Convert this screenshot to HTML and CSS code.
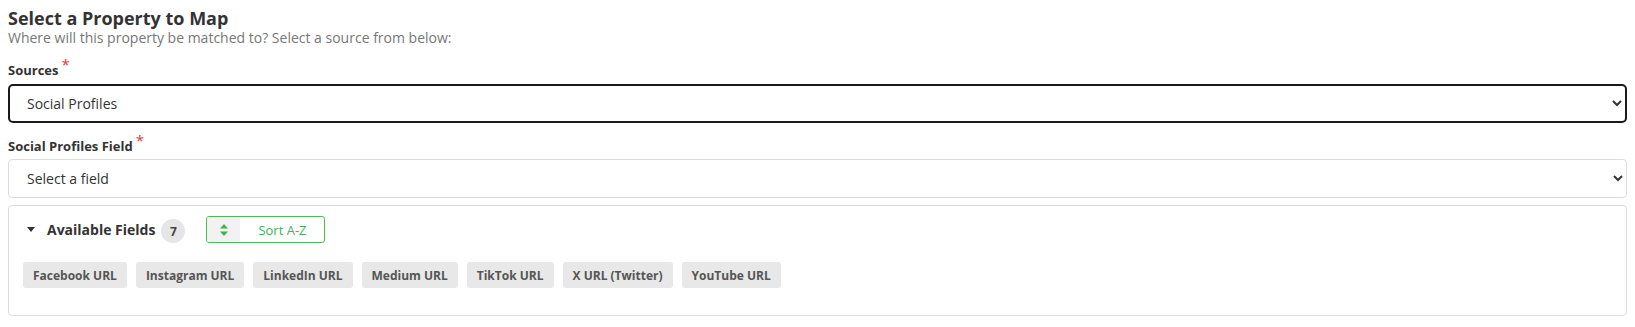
FILE: index.html
```html
<!DOCTYPE html>
<html>
	<head>
		<meta charset="UTF-8">
		<title>Select a Property to Map</title>
		<link rel="stylesheet" href="styles.css">
	</head>
	<body>
		<div class="mapper">
			<h1 class="title">Select a Property to Map</h1>
			<p class="subtitle">Where will this property be matched to? Select a source from below:</p>

			<label class="field-label" for="sources">Sources<span class="req">*</span></label>
			<select id="sources" class="field-select active">
				<option>Social Profiles</option>
			</select>

			<label class="field-label second" for="field">Social Profiles Field<span class="req">*</span></label>
			<select id="field" class="field-select">
				<option>Select a field</option>
			</select>

			<div class="panel">
				<div class="panel-head">
					<span class="caret"></span>
					<span class="panel-title">Available Fields</span>
					<span class="count">7</span>
					<button class="sort-btn">
						<span class="sort-icon">
							<svg width="8" height="12" viewBox="0 0 8 12">
								<path d="M4 0 L8 4.5 L0 4.5 Z" fill="#3fb34f"/>
								<path d="M0 7.5 L8 7.5 L4 12 Z" fill="#3fb34f"/>
							</svg>
						</span>
						<span class="sort-text">Sort A-Z</span>
					</button>
				</div>
				<div class="chips">
					<span class="chip">Facebook URL</span>
					<span class="chip">Instagram URL</span>
					<span class="chip">LinkedIn URL</span>
					<span class="chip">Medium URL</span>
					<span class="chip">TikTok URL</span>
					<span class="chip">X URL (Twitter)</span>
					<span class="chip">YouTube URL</span>
				</div>
			</div>
		</div>
	</body>
</html>
```

FILE: styles.css
```css
*{
	box-sizing: border-box;
}
body{
	margin: 8px;
	font-family: "Open Sans", "Liberation Sans", sans-serif;
	color: #333;
	background-color: #fff;
}
.mapper{
	display: flex;
	flex-direction: column;
}
.title{
	margin: 0;
	font-size: 18px;
	line-height: 20px;
	font-weight: 700;
	color: #333;
}
.subtitle{
	margin: 0;
	font-size: 14px;
	line-height: 20px;
	color: #777;
}
.field-label{
	margin-top: 12px;
	margin-bottom: 5px;
	font-size: 13px;
	line-height: 18px;
	font-weight: 700;
	color: #333;
}
.field-label.second{
	margin-top: 13px;
	margin-bottom: 4px;
}
.req{
	color: #e8333a;
	font-size: 15px;
	font-weight: 400;
	margin-left: 3px;
	position: relative;
	top: -5px;
}
.field-select{
	width: 100%;
	height: 39px;
	padding: 0 14px;
	font-family: "Open Sans", "Liberation Sans", sans-serif;
	font-size: 14px;
	color: #333;
	background-color: #fff;
	border: 1px solid #ddd;
	border-radius: 4px;
	outline: none;
}
.field-select.active{
	height: 39px;
	padding: 0 13px;
	border: 2px solid #1a1a1a;
	border-radius: 5px;
}
.panel{
	margin-top: 7px;
	border: 1px solid #ddd;
	border-radius: 4px;
	padding: 10px 13px 27px;
}
.panel-head{
	display: flex;
	align-items: center;
	height: 27px;
}
.caret{
	width: 0;
	height: 0;
	margin-left: 5px;
	border-left: 4px solid transparent;
	border-right: 4px solid transparent;
	border-top: 5px solid #333;
}
.panel-title{
	margin-left: 12px;
	font-size: 14px;
	font-weight: 700;
	color: #333;
}
.count{
	width: 24px;
	height: 24px;
	margin-left: 6px;
	margin-top: 3px;
	border-radius: 50%;
	background-color: #e6e6e6;
	display: flex;
	align-items: center;
	justify-content: center;
	font-size: 12px;
	font-weight: 700;
	color: #444;
}
.sort-btn{
	display: flex;
	align-items: stretch;
	width: 119px;
	height: 27px;
	margin-left: 21px;
	padding: 0;
	border: 1px solid #4cbb55;
	border-radius: 3px;
	background-color: #fff;
	overflow: hidden;
	font-family: "Open Sans", "Liberation Sans", sans-serif;
}
.sort-icon{
	width: 33px;
	background-color: #f2f2f2;
	display: flex;
	align-items: center;
	justify-content: center;
}
.sort-text{
	flex: 1;
	display: flex;
	align-items: center;
	justify-content: center;
	font-size: 13px;
	color: #3fb34f;
}
.chips{
	display: flex;
	gap: 9px;
	margin-top: 19px;
	padding-left: 1px;
}
.chip{
	height: 26px;
	padding: 0 10px;
	border-radius: 3px;
	background-color: #e8e8e8;
	display: flex;
	align-items: center;
	font-size: 12px;
	font-weight: 700;
	color: #555;
}
```
